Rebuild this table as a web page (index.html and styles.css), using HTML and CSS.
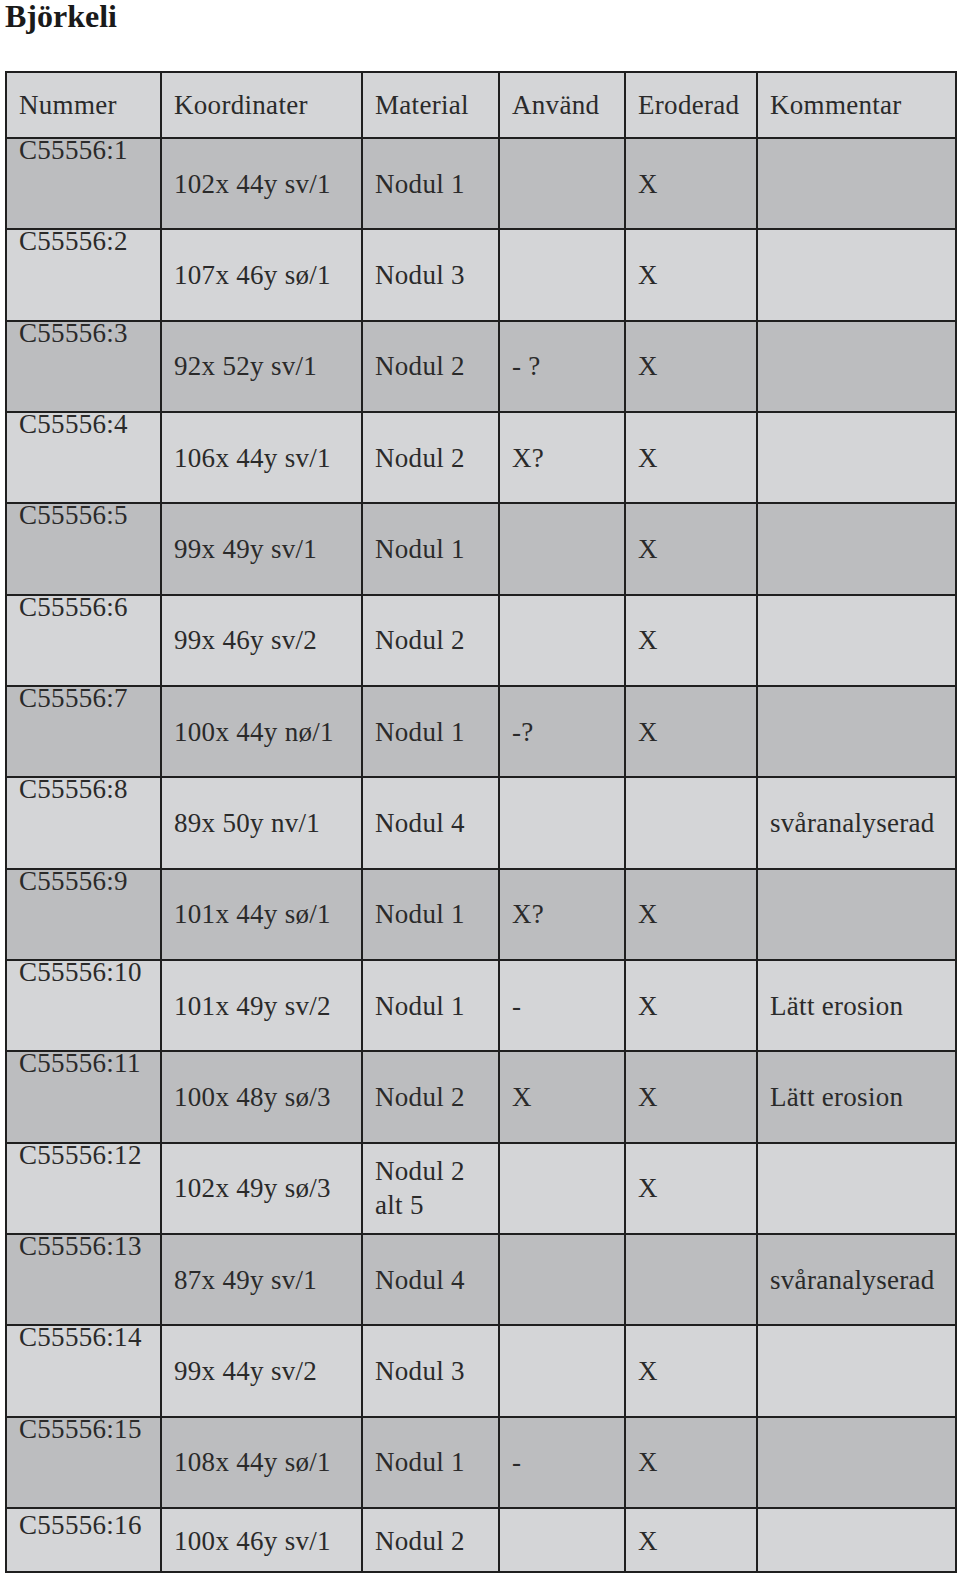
FILE: index.html
```html
<!DOCTYPE html>
<html lang="sv">
<head>
<meta charset="utf-8">
<title>Björkeli</title>
<link rel="stylesheet" href="styles.css">
</head>
<body>
<h1 class="title">Björkeli</h1>
<table class="grid">
  <colgroup>
    <col class="c-num"><col class="c-koord"><col class="c-mat"><col class="c-anv"><col class="c-ero"><col class="c-kom">
  </colgroup>
  <thead>
    <tr class="head">
      <th>Nummer</th><th>Koordinater</th><th>Material</th><th>Använd</th><th>Eroderad</th><th>Kommentar</th>
    </tr>
  </thead>
  <tbody>
    <tr class="dark"><td class="num"><div>C55556:1</div></td><td>102x 44y sv/1</td><td>Nodul 1</td><td></td><td>X</td><td></td></tr>
    <tr class="light"><td class="num"><div>C55556:2</div></td><td>107x 46y sø/1</td><td>Nodul 3</td><td></td><td>X</td><td></td></tr>
    <tr class="dark"><td class="num"><div>C55556:3</div></td><td>92x 52y sv/1</td><td>Nodul 2</td><td>- ?</td><td>X</td><td></td></tr>
    <tr class="light"><td class="num"><div>C55556:4</div></td><td>106x 44y sv/1</td><td>Nodul 2</td><td>X?</td><td>X</td><td></td></tr>
    <tr class="dark"><td class="num"><div>C55556:5</div></td><td>99x 49y sv/1</td><td>Nodul 1</td><td></td><td>X</td><td></td></tr>
    <tr class="light"><td class="num"><div>C55556:6</div></td><td>99x 46y sv/2</td><td>Nodul 2</td><td></td><td>X</td><td></td></tr>
    <tr class="dark"><td class="num"><div>C55556:7</div></td><td>100x 44y nø/1</td><td>Nodul 1</td><td>-?</td><td>X</td><td></td></tr>
    <tr class="light"><td class="num"><div>C55556:8</div></td><td>89x 50y nv/1</td><td>Nodul 4</td><td></td><td></td><td>svåranalyserad</td></tr>
    <tr class="dark"><td class="num"><div>C55556:9</div></td><td>101x 44y sø/1</td><td>Nodul 1</td><td>X?</td><td>X</td><td></td></tr>
    <tr class="light"><td class="num"><div>C55556:10</div></td><td>101x 49y sv/2</td><td>Nodul 1</td><td>-</td><td>X</td><td>Lätt erosion</td></tr>
    <tr class="dark"><td class="num"><div>C55556:11</div></td><td>100x 48y sø/3</td><td>Nodul 2</td><td>X</td><td>X</td><td>Lätt erosion</td></tr>
    <tr class="light"><td class="num"><div>C55556:12</div></td><td>102x 49y sø/3</td><td>Nodul 2<br>alt 5</td><td></td><td>X</td><td></td></tr>
    <tr class="dark"><td class="num"><div>C55556:13</div></td><td>87x 49y sv/1</td><td>Nodul 4</td><td></td><td></td><td>svåranalyserad</td></tr>
    <tr class="light"><td class="num"><div>C55556:14</div></td><td>99x 44y sv/2</td><td>Nodul 3</td><td></td><td>X</td><td></td></tr>
    <tr class="dark"><td class="num"><div>C55556:15</div></td><td>108x 44y sø/1</td><td>Nodul 1</td><td>-</td><td>X</td><td></td></tr>
    <tr class="light last"><td class="num"><div>C55556:16</div></td><td>100x 46y sv/1</td><td>Nodul 2</td><td></td><td>X</td><td></td></tr>
  </tbody>
</table>
</body>
</html>
```

FILE: styles.css
```css
html, body {
  margin: 0;
  padding: 0;
  background: #ffffff;
}

body {
  font-family: "Liberation Serif", "DejaVu Serif", serif;
  color: #2a2a2a;
}

.title {
  margin: 0;
  padding: 2px 0 0 5px;
  font-size: 32px;
  line-height: 28px;
  font-weight: bold;
  color: #1a1a1a;
  height: 71px;
  box-sizing: border-box;
}

.grid {
  margin-left: 5px;
  border-collapse: collapse;
  table-layout: fixed;
  width: 952px;
  font-size: 27px;
  letter-spacing: 0.3px;
}

.c-num { width: 155px; }
.c-koord { width: 201px; }
.c-mat { width: 137px; }
.c-anv { width: 126px; }
.c-ero { width: 132px; }
.c-kom { width: 199px; }

.grid th,
.grid td {
  border: 2px solid #1f1f1f;
  padding: 0 2px 0 12px;
  text-align: left;
  font-weight: normal;
  vertical-align: middle;
  line-height: 34px;
  white-space: nowrap;
}

.head { height: 66px; background: #d4d5d7; }
.dark { height: 91.33px; background: #bcbdbf; }
.light { height: 91.33px; background: #d4d5d7; }
.grid tr.last { height: 64px; }

.grid td.num {
  vertical-align: top;
}

.grid td.num div {
  line-height: 27px;
  margin-top: -2px;
}

.grid tr.last td {
  padding-top: 2px;
}

.grid tr.last td.num {
  padding-top: 3px;
}

.grid tr.last td.num div {
  margin-top: 0;
}
```
